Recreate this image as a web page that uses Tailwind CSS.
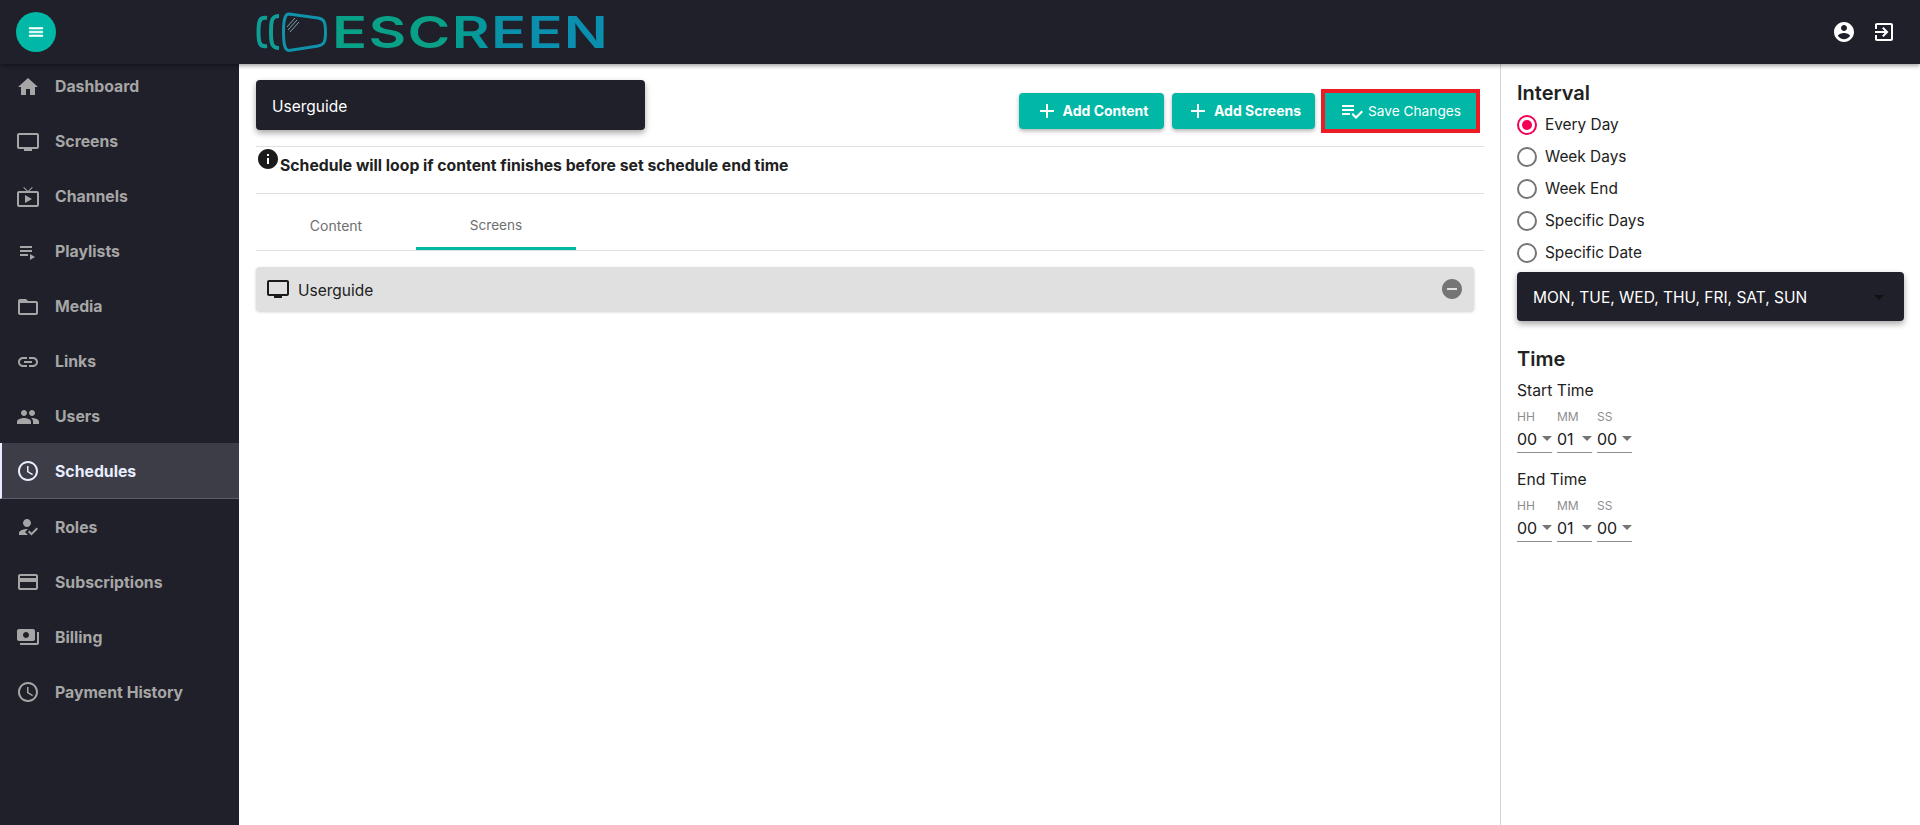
<!doctype html>
<html><head><meta charset="utf-8"><script src="https://cdn.jsdelivr.net/npm/@tailwindcss/browser@4"></script><title>Schedules</title></head>
<body class="h-[825px] w-[1920px] overflow-hidden bg-white font-['Inter','Noto_Sans',sans-serif] text-[#212121]">
<header class="relative z-10 flex h-16 items-center bg-[#1f2029] pl-4 pr-6 shadow-[0_2px_4px_rgba(0,0,0,0.35)]">
  <button class="flex h-10 w-10 items-center justify-center rounded-full bg-[#00b8a5]"><svg class="h-[18px] w-[18px] fill-white stroke-white stroke-[0.8]" viewBox="0 0 24 24"><path d="M3 18h18v-2H3v2zm0-5h18v-2H3v2zm0-7v2h18V6H3z"/></svg></button>
  <div class="ml-[200px] flex items-center">
    <svg class="h-10 w-[72px]" viewBox="0 0 72 40" fill="none"><path d="M11 6 C4 5 2.5 8 2.5 20 C2.5 32 4 35 11 34" stroke="#0f9e96" stroke-width="4"/><path d="M23 4 C16 4 15 8 15 20 C15 32 16 36 23 36" stroke="#0f9e96" stroke-width="4"/><path d="M33 2 L62 6 C68 7 69.5 10 69.5 20 C69.5 30 68 33 62 34 L33 38.5 C29 38.5 27.5 33 27.5 20 C27.5 7 29 2 33 2 Z" stroke="#0f92aa" stroke-width="3"/><path d="M31 15 L39 6 M32 18 L41 8 M34 20 L43 10" stroke="#7fa3a8" stroke-width="1"/></svg>
    <span class="ml-[4px] origin-left scale-x-[1.32] bg-gradient-to-r from-[#08a087] from-40% to-[#0a8fae] to-65% bg-clip-text text-[44px] font-semibold leading-[44px] text-transparent tracking-[1px]">ESCREEN</span>
  </div>
  <div class="ml-auto flex items-center gap-4">
    <svg class="h-6 w-6 fill-white" viewBox="0 0 24 24"><path d="M12 2C6.48 2 2 6.48 2 12s4.48 10 10 10 10-4.48 10-10S17.52 2 12 2zm0 3c1.66 0 3 1.34 3 3s-1.34 3-3 3-3-1.34-3-3 1.34-3 3-3zm0 14.2c-2.5 0-4.71-1.28-6-3.22.03-1.99 4-3.08 6-3.08 1.99 0 5.97 1.09 6 3.08-1.29 1.94-3.5 3.22-6 3.22z"/></svg>
    <svg class="h-6 w-6 fill-white" viewBox="0 0 24 24"><path d="M10.09 15.59L11.5 17l5-5-5-5-1.41 1.41L12.67 11H3v2h9.67l-2.58 2.59zM19 3H5c-1.11 0-2 .9-2 2v4h2V5h14v14H5v-4H3v4c0 1.1.89 2 2 2h14c1.1 0 2-.9 2-2V5c0-1.1-.9-2-2-2z"/></svg>
  </div>
</header>
<div class="flex h-[761px]">
  <nav class="-mt-[5px] h-[766px] w-[239px] shrink-0 bg-[#1f2029] text-[15.8px] font-bold text-[#a6a6a6]">
    <a class="flex h-[55px] items-center pl-4"><svg class="mr-[15px] h-6 w-6 fill-[#a6a6a6]" viewBox="0 0 24 24"><path d="M10 20v-6h4v6h5v-8h3L12 3 2 12h3v8z"/></svg><span class="mt-px">Dashboard</span></a>
    <a class="flex h-[55px] items-center pl-4"><svg class="mr-[15px] h-6 w-6 fill-[#a6a6a6]" viewBox="0 0 24 24"><path d="M21 3H3c-1.1 0-2 .9-2 2v12c0 1.1.9 2 2 2h5v2h8v-2h5c1.1 0 1.99-.9 1.99-2L23 5c0-1.1-.9-2-2-2zm0 14H3V5h18v12z"/></svg><span class="mt-px">Screens</span></a>
    <a class="flex h-[55px] items-center pl-4"><svg class="mr-[15px] h-6 w-6 fill-[#a6a6a6]" viewBox="0 0 24 24"><path d="M21 6h-7.59l3.29-3.29L16 2l-4 4-4-4-.71.71L10.59 6H3c-1.1 0-2 .89-2 2v12c0 1.1.9 2 2 2h18c1.1 0 2-.9 2-2V8c0-1.11-.9-2-2-2zm0 14H3V8h18v12zM9 10v8l7-4z"/></svg><span class="mt-px">Channels</span></a>
    <a class="flex h-[55px] items-center pl-4"><svg class="mr-[15px] h-6 w-6 fill-[#a6a6a6]" viewBox="0 0 24 24"><path d="M4 10h12v2H4zm0-4h12v2H4zm0 8h8v2H4zm10 0v6l5-3z"/></svg><span class="mt-px">Playlists</span></a>
    <a class="flex h-[55px] items-center pl-4"><svg class="mr-[15px] h-6 w-6 fill-[#a6a6a6]" viewBox="0 0 24 24"><path d="M20 6h-8l-2-2H4c-1.1 0-1.99.9-1.99 2L2 18c0 1.1.9 2 2 2h16c1.1 0 2-.9 2-2V8c0-1.1-.9-2-2-2zm0 12H4V8h16v10z"/></svg><span class="mt-px">Media</span></a>
    <a class="flex h-[55px] items-center pl-4"><svg class="mr-[15px] h-6 w-6 fill-[#a6a6a6]" viewBox="0 0 24 24"><path d="M3.9 12c0-1.71 1.39-3.1 3.1-3.1h4V7H7c-2.76 0-5 2.24-5 5s2.24 5 5 5h4v-1.9H7c-1.71 0-3.1-1.39-3.1-3.1zM8 13h8v-2H8v2zm9-6h-4v1.9h4c1.71 0 3.1 1.39 3.1 3.1s-1.39 3.1-3.1 3.1h-4V17h4c2.76 0 5-2.24 5-5s-2.24-5-5-5z"/></svg><span class="mt-px">Links</span></a>
    <a class="flex h-[55px] items-center pl-4"><svg class="mr-[15px] h-6 w-6 fill-[#a6a6a6]" viewBox="0 0 24 24"><path d="M16 11c1.66 0 2.99-1.34 2.99-3S17.66 5 16 5c-1.66 0-3 1.34-3 3s1.34 3 3 3zm-8 0c1.66 0 2.99-1.34 2.99-3S9.66 5 8 5C6.34 5 5 6.34 5 8s1.34 3 3 3zm0 2c-2.33 0-7 1.17-7 3.5V19h14v-2.5c0-2.33-4.67-3.5-7-3.5zm8 0c-.29 0-.62.02-.97.05 1.16.84 1.97 1.97 1.97 3.45V19h6v-2.5c0-2.33-4.67-3.5-7-3.5z"/></svg><span class="mt-px">Users</span></a>
    <a class="-mt-px flex h-14 items-center border-b border-l-2 border-b-[#5c5d66] border-l-[#e8eeff] bg-[#3c3d47] pl-[14px] text-[#e8eeff]"><svg class="mr-[15px] h-6 w-6 fill-[#e8eeff]" viewBox="0 0 24 24"><path d="M11.99 2C6.47 2 2 6.48 2 12s4.47 10 9.99 10C17.52 22 22 17.52 22 12S17.52 2 11.99 2zM12 20c-4.42 0-8-3.58-8-8s3.58-8 8-8 8 3.58 8 8-3.58 8-8 8zm.5-13H11v6l5.25 3.15.75-1.23-4.5-2.67z"/></svg><span class="mt-0.5">Schedules</span></a>
    <a class="flex h-[55px] items-center pl-4"><svg class="mr-[15px] h-6 w-6 fill-[#a6a6a6]" viewBox="0 0 24 24"><path d="M9 17l3-2.94c-.39-.04-.68-.06-1-.06-2.67 0-8 1.34-8 4v2h9l-3-3zm2-5c2.21 0 4-1.79 4-4s-1.79-4-4-4-4 1.79-4 4 1.79 4 4 4zm4.47 8.5L12 17l1.4-1.41 2.07 2.08 5.13-5.17 1.4 1.41z"/></svg><span class="mt-0.5">Roles</span></a>
    <a class="flex h-[55px] items-center pl-4"><svg class="mr-[15px] h-6 w-6 fill-[#a6a6a6]" viewBox="0 0 24 24"><path d="M20 4H4c-1.11 0-1.99.89-1.99 2L2 18c0 1.11.89 2 2 2h16c1.11 0 2-.89 2-2V6c0-1.11-.89-2-2-2zm0 14H4v-6h16v6zm0-10H4V6h16v2z"/></svg><span class="mt-0.5">Subscriptions</span></a>
    <a class="flex h-[55px] items-center pl-4"><svg class="mr-[15px] h-6 w-6 fill-[#a6a6a6]" viewBox="0 0 24 24"><path d="M19 14V6c0-1.1-.9-2-2-2H3c-1.1 0-2 .9-2 2v8c0 1.1.9 2 2 2h14c1.1 0 2-.9 2-2zm-9-1c-1.66 0-3-1.34-3-3s1.34-3 3-3 3 1.34 3 3-1.34 3-3 3zm13-6v11c0 1.1-.9 2-2 2H4v-2h17V7h2z"/></svg><span class="mt-0.5">Billing</span></a>
    <a class="flex h-[55px] items-center pl-4"><svg class="mr-[15px] h-6 w-6 fill-[#a6a6a6]" viewBox="0 0 24 24"><path d="M11.99 2C6.47 2 2 6.48 2 12s4.47 10 9.99 10C17.52 22 22 17.52 22 12S17.52 2 11.99 2zM12 20c-4.42 0-8-3.58-8-8s3.58-8 8-8 8 3.58 8 8-3.58 8-8 8zm.5-13H11v6l5.25 3.15.75-1.23-4.5-2.67z"/></svg><span class="mt-0.5">Payment History</span></a>
  </nav>
  <main class="w-[1262px] shrink-0 border-r border-[#d4d4d4] pl-[17px] pr-4 pt-4">
    <div class="flex h-[67px] items-start border-b border-[#e0e0e0]">
      <div class="flex h-[50px] w-[389px] items-center rounded bg-[#1f2029] pl-4 pt-1 text-[15.5px] text-white shadow-[0_3px_6px_rgba(0,0,0,0.35)]">Userguide</div>
      <div class="ml-auto mr-2 mt-[13px] flex items-center text-[14px] text-white">
        <button class="flex h-9 w-[145px] items-center justify-center rounded bg-[#00b8a5] font-bold shadow-[0_2px_4px_rgba(0,0,0,0.3)]"><svg class="mr-1 h-6 w-6 fill-white" viewBox="0 0 24 24"><path d="M19 13h-6v6h-2v-6H5v-2h6V5h2v6h6v2z"/></svg><span class="-mt-px">Add Content</span></button>
        <button class="ml-2 flex h-9 w-[143px] items-center justify-center rounded bg-[#00b8a5] font-bold shadow-[0_2px_4px_rgba(0,0,0,0.3)]"><svg class="mr-1 h-6 w-6 fill-white" viewBox="0 0 24 24"><path d="M19 13h-6v6h-2v-6H5v-2h6V5h2v6h6v2z"/></svg><span class="-mt-px">Add Screens</span></button>
        <button class="ml-2.5 flex h-9 w-[151px] items-center justify-center bg-[#00b8a5] text-[13.7px] outline-4 outline-[#ed1c24]"><svg class="mr-1 h-6 w-6 fill-white" viewBox="0 0 24 24"><path d="M14 10H2v2h12v-2zm0-4H2v2h12V6zM2 16h8v-2H2v2zm19.5-4.5L23 13l-6.99 7-4.51-4.5L13 14l3.01 3 5.49-5.5z"/></svg>Save Changes</button>
      </div>
    </div>
    <div class="flex h-[47px] border-b border-[#e0e0e0] text-[15.75px] font-bold">
      <svg class="h-6 w-6 shrink-0 fill-[#1b1b1b]" viewBox="0 0 24 24"><path d="M12 2C6.48 2 2 6.48 2 12s4.48 10 10 10 10-4.48 10-10S17.52 2 12 2zm1 15h-2v-6h2v6zm0-8h-2V7h2v2z"/></svg>
      <p class="pt-[7px] leading-6">Schedule will loop if content finishes before set schedule end time</p>
    </div>
    <div class="flex h-[57px] border-b border-[#e0e0e0] text-[14px] text-[#6f6f6f]">
      <div class="flex h-14 w-40 items-center justify-center pt-1.5">Content</div>
      <div class="flex h-14 w-40 items-center justify-center border-b-[3px] border-[#00b8a5] pt-[9px] text-[13.6px]">Screens</div>
    </div>
    <div class="mr-2.5 mt-4 flex h-11 items-center rounded bg-[#e0e0e0] pl-[10px] pr-2.5 shadow-[0_1px_3px_rgba(0,0,0,0.2)]">
      <svg class="mr-2 h-6 w-6 fill-[#1b1b1b]" viewBox="0 0 24 24"><path d="M21 3H3c-1.1 0-2 .9-2 2v12c0 1.1.9 2 2 2h5v2h8v-2h5c1.1 0 1.99-.9 1.99-2L23 5c0-1.1-.9-2-2-2zm0 14H3V5h18v12z"/></svg>
      <span class="pt-1 text-[15.5px]">Userguide</span>
      <svg class="ml-auto h-6 w-6 fill-[#757575]" viewBox="0 0 24 24"><path d="M12 2C6.48 2 2 6.48 2 12s4.48 10 10 10 10-4.48 10-10S17.52 2 12 2zm5 11H7v-2h10v2z"/></svg>
    </div>
  </main>
  <aside class="flex-1 pl-4 pr-4 pt-[14px]">
    <h2 class="text-xl font-semibold leading-[30px]">Interval</h2>
    <div class="mt-[1px] text-[15.4px]">
      <label class="flex h-8 items-center"><span class="mr-2 flex h-5 w-5 items-center justify-center rounded-full border-2 border-[#f50057]"><span class="h-2.5 w-2.5 rounded-full bg-[#f50057]"></span></span>Every Day</label>
      <label class="flex h-8 items-center"><span class="mr-2 h-5 w-5 rounded-full border-2 border-[#757575]"></span>Week Days</label>
      <label class="flex h-8 items-center"><span class="mr-2 h-5 w-5 rounded-full border-2 border-[#757575]"></span>Week End</label>
      <label class="flex h-8 items-center"><span class="mr-2 h-5 w-5 rounded-full border-2 border-[#757575]"></span>Specific Days</label>
      <label class="flex h-8 items-center"><span class="mr-2 h-5 w-5 rounded-full border-2 border-[#757575]"></span>Specific Date</label>
    </div>
    <div class="mt-[3px] flex h-[49px] items-center rounded bg-[#1f2029] pl-4 pr-5 pt-0.5 text-[15.5px] text-white shadow-[0_3px_6px_rgba(0,0,0,0.35)]">MON, TUE, WED, THU, FRI, SAT, SUN<span class="ml-auto h-0 w-0 border-x-[5px] border-t-[5px] border-x-transparent border-t-[#111]"></span></div>
    <h2 class="mt-[23px] text-xl font-semibold leading-[30px]">Time</h2>
    <p class="mt-[5px] text-[15.7px] leading-6">Start Time</p>
    <div class="mt-1.5 flex gap-[5px]">
      <div class="w-[35px]"><p class="text-[12px] leading-4 text-[#8e8e8e]">HH</p><div class="flex h-7 items-center justify-between border-b border-[#8e8e8e] text-base">00<span class="h-0 w-0 border-x-[5px] border-t-[5px] border-x-transparent border-t-[#757575]"></span></div></div>
      <div class="w-[35px]"><p class="text-[12px] leading-4 text-[#8e8e8e]">MM</p><div class="flex h-7 items-center justify-between border-b border-[#8e8e8e] text-base">01<span class="h-0 w-0 border-x-[5px] border-t-[5px] border-x-transparent border-t-[#757575]"></span></div></div>
      <div class="w-[35px]"><p class="text-[12px] leading-4 text-[#8e8e8e]">SS</p><div class="flex h-7 items-center justify-between border-b border-[#8e8e8e] text-base">00<span class="h-0 w-0 border-x-[5px] border-t-[5px] border-x-transparent border-t-[#757575]"></span></div></div>
    </div>
    <p class="mt-[15px] text-[15.7px] leading-6">End Time</p>
    <div class="mt-1.5 flex gap-[5px]">
      <div class="w-[35px]"><p class="text-[12px] leading-4 text-[#8e8e8e]">HH</p><div class="flex h-7 items-center justify-between border-b border-[#8e8e8e] text-base">00<span class="h-0 w-0 border-x-[5px] border-t-[5px] border-x-transparent border-t-[#757575]"></span></div></div>
      <div class="w-[35px]"><p class="text-[12px] leading-4 text-[#8e8e8e]">MM</p><div class="flex h-7 items-center justify-between border-b border-[#8e8e8e] text-base">01<span class="h-0 w-0 border-x-[5px] border-t-[5px] border-x-transparent border-t-[#757575]"></span></div></div>
      <div class="w-[35px]"><p class="text-[12px] leading-4 text-[#8e8e8e]">SS</p><div class="flex h-7 items-center justify-between border-b border-[#8e8e8e] text-base">00<span class="h-0 w-0 border-x-[5px] border-t-[5px] border-x-transparent border-t-[#757575]"></span></div></div>
    </div>
  </aside>
</div>
</body></html>
